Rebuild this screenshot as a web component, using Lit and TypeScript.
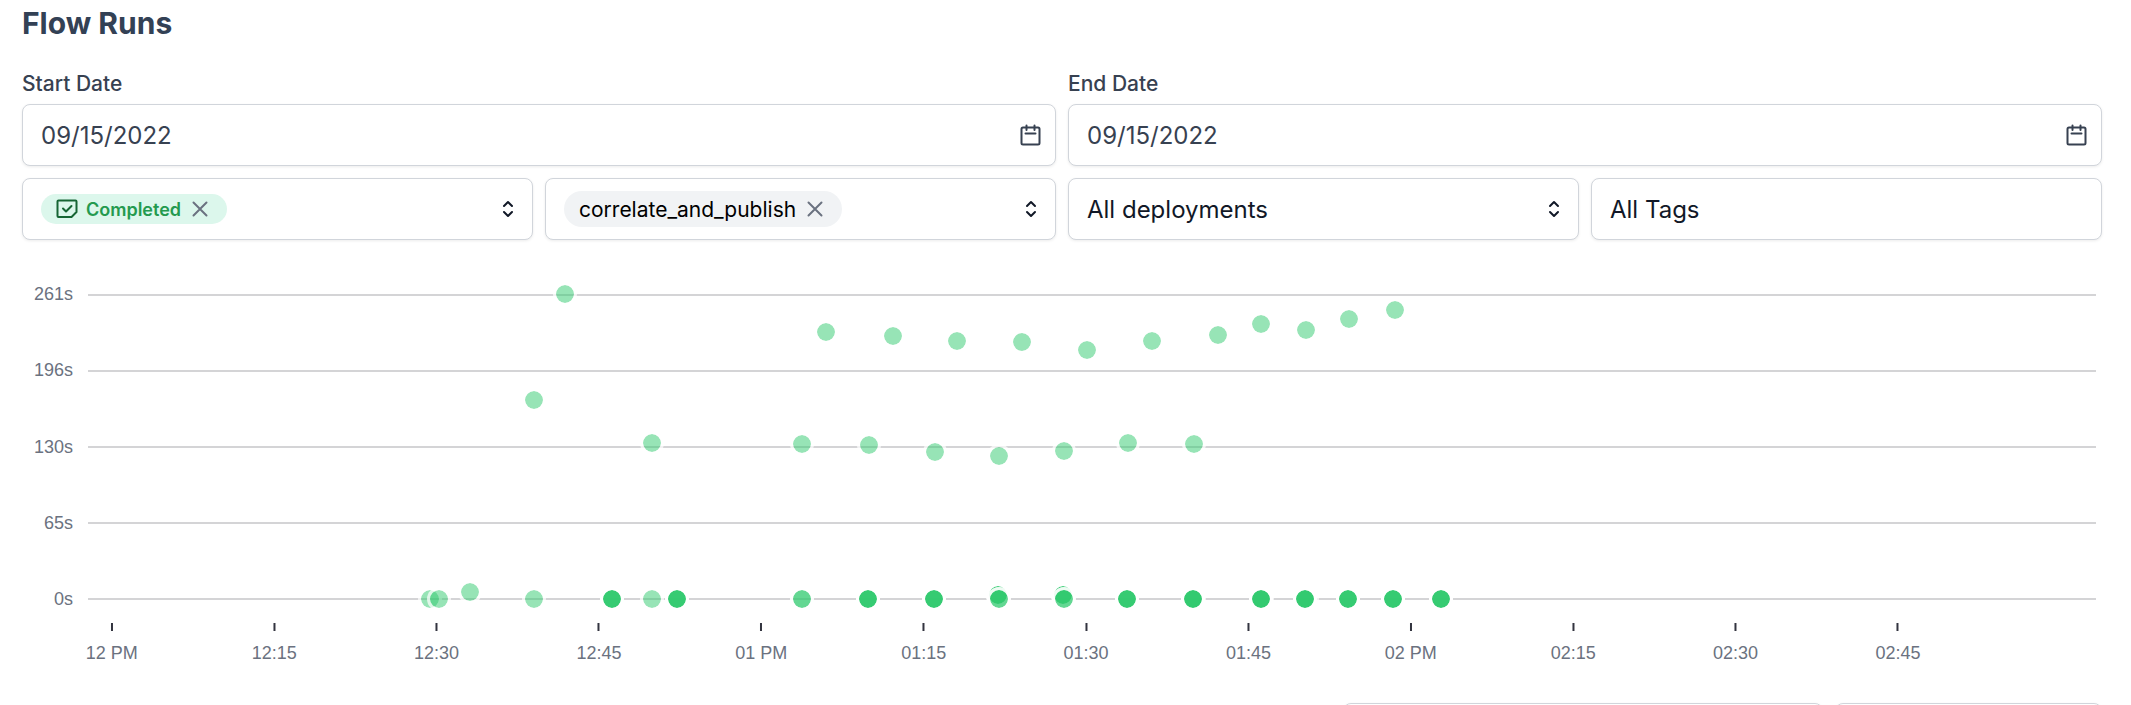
import { LitElement, html, css, svg } from "lit";
import { customElement } from "lit/decorators.js";

type Run = { minutes: number; seconds: number };

const MAX_SECONDS = 261;
const START_MINUTES = -2.2;
const SPAN_MINUTES = 185.5;

/* [minutes after noon, duration in seconds, how many runs share the spot] */
const RUNS: [number, number, number?][] = [
  [41.87, 261], [39, 170.5], [49.9, 133.5],
  [66, 228.5], [72.2, 225], [78.1, 221], [84.1, 220], [90.1, 213], [96.1, 221],
  [102.2, 226], [106.15, 235.5], [110.3, 230.5], [114.3, 240], [118.5, 247],
  [63.75, 133], [69.95, 132], [76.05, 126], [81.95, 122.5], [87.95, 127], [93.9, 133.5], [99.95, 133],
  [29.35, 0], [30.2, 0], [33.1, 6], [39, 0], [46.25, 0, 5], [49.9, 0], [52.2, 0, 5],
  [63.75, 0, 2], [69.9, 0, 5], [76, 0, 5],
  [81.85, 3.2, 4], [81.95, 0, 2],
  [87.85, 3.2, 4], [87.95, 0, 2],
  [93.8, 0, 5], [99.95, 0], [99.85, 0, 5], [106.25, 0], [106.15, 0, 5],
  [110.4, 0], [110.2, 0, 5], [114.2, 0, 5], [118.4, 0, 5], [122.75, 0, 5],
];

const TICKS = ["12 PM", "12:15", "12:30", "12:45", "01 PM", "01:15", "01:30", "01:45", "02 PM", "02:15", "02:30", "02:45"];
const LEVELS = ["261s", "196s", "130s", "65s", "0s"];

const left = (minutes: number) => ((minutes - START_MINUTES) / SPAN_MINUTES) * 100;

@customElement("run-scatter")
export class RunScatter extends LitElement {
  static styles = css`
    :host { display: block; }
    .chart {
      display: grid;
      grid-template-columns: 51px 1fr;
      column-gap: 15px;
      padding-right: 6px;
      font-family: "Liberation Sans", Arial, sans-serif;
      font-size: 18px;
      line-height: 24px;
      color: #6b7280;
    }
    .levels { display: flex; flex-direction: column; justify-content: space-between; align-items: flex-end; height: 329px; }
    .plot { position: relative; height: 305px; margin: 12px 0; }
    .lines { display: flex; flex-direction: column; justify-content: space-between; height: 306px; }
    .line { height: 2px; background: #d4d4d6; }
    .dot {
      position: absolute;
      box-sizing: border-box;
      width: 24px;
      height: 24px;
      margin: -12px 0 0 -12px;
      border: 3px solid rgba(255, 255, 255, 0.7);
      border-radius: 50%;
      background: rgba(47, 202, 110, 0.5);
      background-clip: padding-box;
    }
    .axis { grid-column: 2; position: relative; height: 54px; margin-top: 12px; }
    .tick { position: absolute; display: flex; flex-direction: column; align-items: center; gap: 10px; transform: translateX(-50%); white-space: nowrap; }
    .mark { width: 2px; height: 8px; background: #33343f; }
  `;

  render() {
    const dots: Run[] = RUNS.flatMap(([minutes, seconds, count = 1]) =>
      Array.from({ length: count }, () => ({ minutes, seconds })));
    return html`
      <div class="chart" role="img" aria-label="Flow run durations">
        <div class="levels">${LEVELS.map((l) => html`<span>${l}</span>`)}</div>
        <div class="plot">
          <div class="lines">${LEVELS.map(() => html`<div class="line"></div>`)}</div>
          ${dots.map((d) => html`<div class="dot" style="left:${left(d.minutes)}%;top:${(1 - d.seconds / MAX_SECONDS) * 100}%"></div>`)}
        </div>
        <div class="axis">
          ${TICKS.map((t, i) => html`<div class="tick" style="left:${left(i * 15)}%"><span class="mark"></span><span>${t}</span></div>`)}
        </div>
      </div>`;
  }
}

const calendar = svg`<path d="M3 3.500h15a1.500 1.500 0 0 1 1.500 1.500v14a1.500 1.500 0 0 1-1.500 1.500h-15a1.500 1.500 0 0 1-1.500-1.500v-14a1.500 1.500 0 0 1 1.500-1.500zM6.500 1.500v4.500M14.500 1.500v4.500M5.500 9.500h10"/>`;
const cross = svg`<path d="M1.500 1.500l13 13M14.500 1.500l-13 13"/>`;
const chevrons = svg`<path d="M2 6l4-4 4 4M2 12l4 4 4-4"/>`;
const state = svg`<path d="M2.500 1.500h17a1 1 0 0 1 1 1v10.500l-5 5h-13a1 1 0 0 1-1-1v-14.500a1 1 0 0 1 1-1zM7 9.500l3 3 5.500-5.500"/>`;

@customElement("app-root")
export class AppRoot extends LitElement {
  static styles = css`
    :host {
      display: block;
      font-family: Inter, "Liberation Sans", sans-serif;
      color: #111827;
      background: #fff;
      overflow: hidden;
      height: 100vh;
    }
    .page { padding: 5px 29px 0 22px; }
    h1 { margin: 0; font-size: 30px; line-height: 36px; font-weight: 700; color: #334155; }
    .filters { display: grid; grid-template-columns: repeat(4, minmax(0, 1fr)); gap: 12px; margin-top: 29px; }
    .field { grid-column: span 2; display: flex; flex-direction: column; gap: 6px; }
    label { font-size: 21px; line-height: 28px; font-weight: 500; color: #374151; }
    .box {
      display: flex;
      align-items: center;
      box-sizing: border-box;
      height: 62px;
      padding: 0 18px;
      border: 1px solid #d1d5db;
      border-radius: 8px;
      background: #fff;
      box-shadow: 0 1px 3px rgba(0, 0, 0, 0.08);
    }
    input, select {
      flex: 1;
      min-width: 0;
      padding: 2px 0 0;
      border: 0;
      outline: 0;
      background: none;
      appearance: none;
      font: inherit;
      font-size: 24px;
      line-height: 32px;
      color: inherit;
    }
    input::placeholder { color: inherit; opacity: 1; }
    .date { color: #374151; padding-right: 14px; }
    button { display: flex; padding: 0; border: 0; background: none; color: inherit; }
    .select { justify-content: space-between; }
    svg { display: block; fill: none; stroke: currentColor; stroke-width: 2; stroke-linecap: round; stroke-linejoin: round; }
    .tag { display: flex; align-items: center; border-radius: 20px; }
    .tag button { color: #6b7280; }
    .state { height: 30px; padding: 0 19px 0 15px; gap: 8px; background: #dcf7ec; color: #249a4f; font-size: 18px; font-weight: 600; }
    .state svg { color: #166534; }
    .state button { margin-left: 3px; }
    .state button svg { color: #6b7280; }
    .name { height: 36px; padding: 0 19px 0 15px; gap: 11px; background: #f1f3f5; color: #000; font-size: 21px; }
    run-scatter { margin-top: 42px; }
    .toolbar { display: grid; grid-template-columns: 480px 267px; justify-content: end; gap: 12px; margin-top: 26px; }
  `;

  render() {
    const arrows = html`<button aria-label="Open list"><svg width="12" height="18" viewBox="0 0 12 18">${chevrons}</svg></button>`;
    const remove = html`<button aria-label="Remove"><svg width="16" height="16" viewBox="0 0 16 16">${cross}</svg></button>`;
    const dateField = (id: string, label: string) => html`
      <div class="field">
        <label for=${id}>${label}</label>
        <div class="box date">
          <input id=${id} value="09/15/2022" />
          <button aria-label="Pick ${label}"><svg width="21" height="22" viewBox="0 0 21 22">${calendar}</svg></button>
        </div>
      </div>`;
    return html`
      <main class="page">
        <h1>Flow Runs</h1>
        <div class="filters">
          ${dateField("start", "Start Date")}
          ${dateField("end", "End Date")}
          <div class="box select">
            <span class="tag state"><svg width="22" height="20" viewBox="0 0 22 20">${state}</svg>Completed${remove}</span>
            ${arrows}
          </div>
          <div class="box select">
            <span class="tag name">correlate_and_publish${remove}</span>
            ${arrows}
          </div>
          <div class="box select">
            <select aria-label="Deployments"><option>All deployments</option></select>
            ${arrows}
          </div>
          <div class="box"><input aria-label="Tags" placeholder="All Tags" /></div>
        </div>
        <run-scatter></run-scatter>
        <div class="toolbar">
          <div class="box"><input aria-label="Search runs" /></div>
          <div class="box"><input aria-label="Sort order" /></div>
        </div>
      </main>`;
  }
}
